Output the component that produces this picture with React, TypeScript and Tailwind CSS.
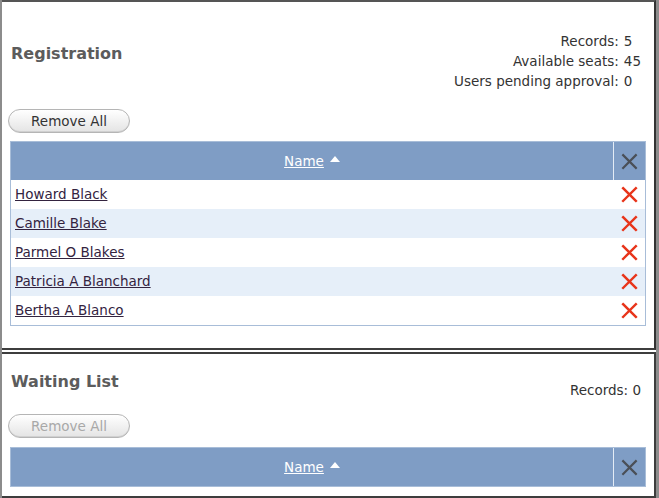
const people = ['Howard Black', 'Camille Blake', 'Parmel O Blakes', 'Patricia A Blanchard', 'Bertha A Blanco']

function XIcon({ className, width = 2 }: { className?: string; width?: number }) {
  return (
    <svg viewBox="0 0 16 16" className={className} fill="none" stroke="currentColor" strokeWidth={width} strokeLinecap="square">
      <path d="M2 2L14 14M14 2L2 14" />
    </svg>
  )
}

function RemoveAll({ disabled }: { disabled?: boolean }) {
  return (
    <button
      disabled={disabled}
      className={
        'h-[24px] w-[122px] rounded-full border border-[#b5b5b5] bg-gradient-to-b from-white to-[#e4e4e4] text-[13.5px] shadow-[inset_0_-1px_0_#d0d0d0] ' +
        (disabled ? 'text-[#a8a8a8]' : 'text-[#333]')
      }
    >
      Remove All
    </button>
  )
}

function TableHeader() {
  return (
    <div className="flex h-[38px] bg-[#7f9dc5]">
      <div className="flex flex-1 items-center justify-center border-r border-[#e4ecf6]">
        <span className="text-[13.5px] text-white underline">Name</span>
        <svg viewBox="0 0 10 6" className="ml-[6px] mb-[4px] h-[6px] w-[10px] fill-white">
          <path d="M0 6L5 0L10 6Z" />
        </svg>
      </div>
      <div className="flex w-[31px] items-center justify-center">
        <XIcon className="h-[17px] w-[17px] text-[#4a4f57]" />
      </div>
    </div>
  )
}

export default function App() {
  return (
    <div className="h-[498px] w-[659px] overflow-hidden border-l-2 border-r-[3px] border-[#8c8c8c] bg-white font-['DejaVu_Sans',sans-serif]">
      <div className="h-[350px] border-y-2 border-r-2 border-t-[#555] border-b-[#3d3d3d] border-r-[#333]">
        <div className="flex items-start justify-between pt-[29px] pl-[9px] pr-[13px]">
          <h2 className="mt-[11px] text-[16px] font-bold text-[#5c5c5c]">Registration</h2>
          <div className="grid grid-cols-[auto_auto] gap-x-[5px] text-[13.5px] leading-[20px] text-[#333]">
            <span className="text-right">Records:</span>
            <span>5</span>
            <span className="text-right">Available seats:</span>
            <span>45</span>
            <span className="text-right">Users pending approval:</span>
            <span>0</span>
          </div>
        </div>
        <div className="mt-[18px] pl-[6px]">
          <RemoveAll />
        </div>
        <div className="mx-[8px] mt-[8px] border border-[#a8bdd8]">
          <TableHeader />
          {people.map((p, i) => (
            <div key={p} className={'flex h-[29px] items-center ' + (i % 2 ? 'bg-[#e6eff9]' : 'bg-white')}>
              <a href="#" className="mb-[2px] flex-1 pl-[4px] text-[13.5px] text-[#33233f] underline">
                {p}
              </a>
              <div className="flex w-[31px] items-center justify-center">
                <XIcon className="h-[17px] w-[17px] text-[#e8341a]" width={2.3} />
              </div>
            </div>
          ))}
        </div>
      </div>
      <div className="mt-[2px] h-[146px] border-y-2 border-r-2 border-[#3d3d3d]">
        <div className="flex items-start justify-between pt-[16px] pl-[9px] pr-[13px]">
          <h2 className="text-[16px] font-bold text-[#5c5c5c]">Waiting List</h2>
          <span className="mt-[10px] text-[13.5px] leading-[20px] text-[#333]">Records: 0</span>
        </div>
        <div className="mt-[14px] pl-[6px]">
          <RemoveAll disabled />
        </div>
        <div className="mx-[8px] mt-[9px] border border-[#a8bdd8]">
          <TableHeader />
        </div>
      </div>
    </div>
  )
}
